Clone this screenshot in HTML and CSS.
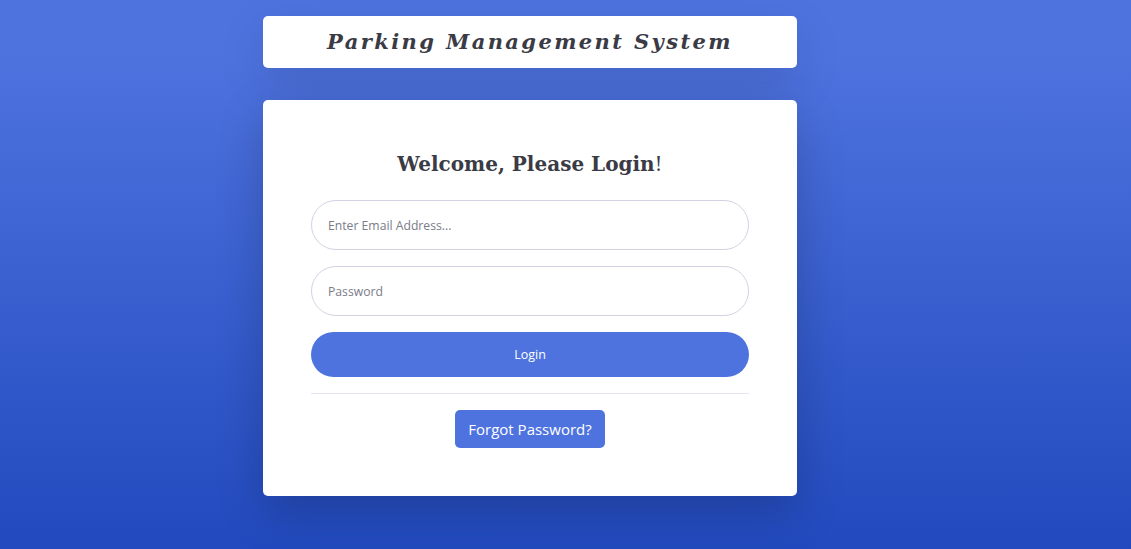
FILE: index.html
```html
<!DOCTYPE html>
<html lang="en">
<head>
<meta charset="utf-8">
<title>Parking Management System - Login</title>
<link rel="stylesheet" href="styles.css">
</head>
<body>
<div class="page">
  <div class="column">
    <div class="brand-card">
      <h1 class="brand">Parking Management System</h1>
    </div>
    <div class="login-card">
      <h2 class="welcome">Welcome, Please Login<span class="bang">!</span></h2>
      <form class="form">
        <input class="field" type="email" placeholder="Enter Email Address...">
        <input class="field" type="password" placeholder="Password">
        <button class="login-btn" type="button">Login</button>
      </form>
      <hr class="divider">
      <div class="forgot-row">
        <a class="forgot-btn" href="#">Forgot Password?</a>
      </div>
    </div>
  </div>
</div>
</body>
</html>
```
FILE: styles.css
```css
html, body {
  margin: 0;
  height: 100%;
}
body {
  background: linear-gradient(180deg, #4e73df 10%, #224abe 100%);
  font-family: "Open Sans", "Noto Sans", sans-serif;
  color: #858796;
  overflow: hidden;
}
.page {
  padding: 16px 0 0 263px;
}
.column {
  width: 534px;
  display: flex;
  flex-direction: column;
  gap: 32px;
}
.brand-card {
  background: #fff;
  border-radius: 5px;
  height: 52px;
  display: flex;
  align-items: center;
  justify-content: center;
  box-shadow: 0 1rem 3rem rgba(0, 0, 0, 0.12);
}
.brand {
  margin: 0;
  font-family: "DejaVu Serif", "Liberation Serif", serif;
  font-style: italic;
  font-weight: bold;
  font-size: 21px;
  letter-spacing: 2.4px;
  color: #3a3b45;
  padding-bottom: 2px;
}
.login-card {
  background: #fff;
  border-radius: 5px;
  padding: 48px 48px 48px;
  height: 396px;
  box-sizing: border-box;
  box-shadow: 0 1rem 3rem rgba(0, 0, 0, 0.2);
}
.welcome {
  margin: 0 0 20px;
  text-align: center;
  font-family: "DejaVu Serif", "Liberation Serif", serif;
  font-weight: bold;
  font-size: 20px;
  line-height: 32px;
  color: #3a3b45;
}
.bang {
  font-weight: normal;
}
.form {
  display: flex;
  flex-direction: column;
  gap: 16px;
}
.field {
  height: 50px;
  box-sizing: border-box;
  border: 1px solid #d1d3e2;
  border-radius: 25px;
  padding: 0 16px;
  font-family: "Open Sans", "Noto Sans", sans-serif;
  font-size: 12.2px;
  color: #6e707e;
  outline: none;
}
.field::placeholder {
  color: #7a7c88;
}
.login-btn {
  height: 45px;
  border: none;
  border-radius: 23px;
  background: #4e73df;
  color: #fff;
  font-family: "Open Sans", "Noto Sans", sans-serif;
  font-size: 12.5px;
}
.divider {
  border: 0;
  border-top: 1px solid #e3e6f0;
  margin: 16px 0 16px;
}
.forgot-row {
  display: flex;
  justify-content: center;
}
.forgot-btn {
  display: flex;
  align-items: center;
  justify-content: center;
  width: 150px;
  height: 38px;
  border-radius: 5px;
  background: #4e73df;
  color: #fff;
  text-decoration: none;
  font-family: "Open Sans", "Noto Sans", sans-serif;
  font-size: 15px;
}
```
